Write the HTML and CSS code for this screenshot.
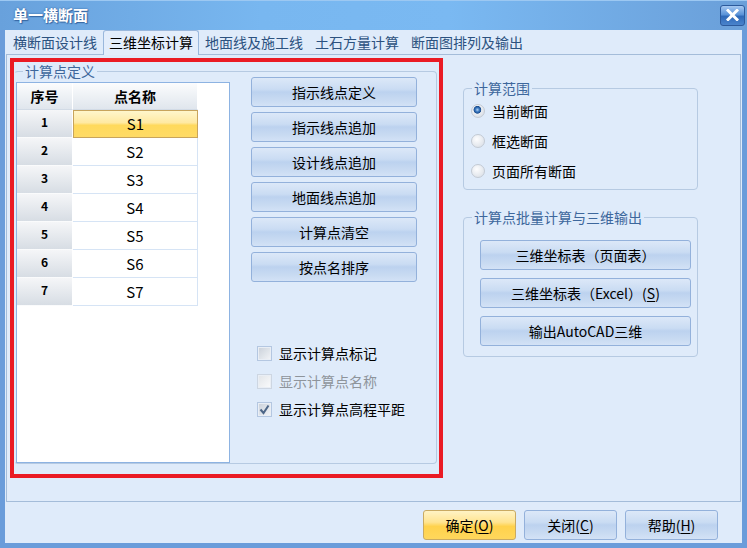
FILE: index.html
```html
<!DOCTYPE html>
<html lang="zh-CN">
<head>
    <meta charset="UTF-8">
    <title>单一横断面</title>
    <link rel="stylesheet" href="styles.css">
</head>
<body>
    <div class="window">
        <div class="titlebar">
            <span class="title">单一横断面</span>
            <button class="close-btn" title="关闭">
                <svg width="13" height="12" viewBox="0 0 13 12">
                    <path d="M2 1.5 L11 10.5 M11 1.5 L2 10.5" stroke="#fff" stroke-width="3" stroke-linecap="square"/>
                </svg>
            </button>
        </div>

        <div class="client">
            <div class="tabs">
                <span class="tab">横断面设计线</span>
                <span class="tab active">三维坐标计算</span>
                <span class="tab">地面线及施工线</span>
                <span class="tab">土石方量计算</span>
                <span class="tab">断面图排列及输出</span>
            </div>

            <div class="tab-page">
                <div class="highlight">
                    <fieldset class="group group-points">
                        <legend>计算点定义</legend>
                        <div class="points-body">
                            <div class="point-grid">
                                <div class="cell head">序号</div>
                                <div class="cell head">点名称</div>
                                <div class="cell num">1</div>
                                <div class="cell name selected">S1</div>
                                <div class="cell num">2</div>
                                <div class="cell name">S2</div>
                                <div class="cell num">3</div>
                                <div class="cell name">S3</div>
                                <div class="cell num">4</div>
                                <div class="cell name">S4</div>
                                <div class="cell num">5</div>
                                <div class="cell name">S5</div>
                                <div class="cell num">6</div>
                                <div class="cell name">S6</div>
                                <div class="cell num">7</div>
                                <div class="cell name">S7</div>
                            </div>

                            <div class="point-actions">
                                <button class="btn">指示线点定义</button>
                                <button class="btn">指示线点追加</button>
                                <button class="btn">设计线点追加</button>
                                <button class="btn">地面线点追加</button>
                                <button class="btn">计算点清空</button>
                                <button class="btn">按点名排序</button>

                                <div class="checks">
                                    <label class="check"><span class="box"></span>显示计算点标记</label>
                                    <label class="check disabled"><span class="box"></span>显示计算点名称</label>
                                    <label class="check">
                                        <span class="box">
                                            <svg width="13" height="13" viewBox="0 0 13 13">
                                                <path d="M2.5 6.5 L5.5 10 L10.5 2.5" fill="none" stroke="#4d6687" stroke-width="2"/>
                                            </svg>
                                        </span>显示计算点高程平距
                                    </label>
                                </div>
                            </div>
                        </div>
                    </fieldset>
                </div>

                <div class="side">
                    <fieldset class="group group-range">
                        <legend>计算范围</legend>
                        <div class="radios">
                            <label class="radio"><span class="dot on"></span>当前断面</label>
                            <label class="radio"><span class="dot"></span>框选断面</label>
                            <label class="radio"><span class="dot"></span>页面所有断面</label>
                        </div>
                    </fieldset>

                    <fieldset class="group group-output">
                        <legend>计算点批量计算与三维输出</legend>
                        <div class="output-actions">
                            <button class="btn">三维坐标表（页面表）</button>
                            <button class="btn">三维坐标表（Excel）(<u>S</u>)</button>
                            <button class="btn">输出AutoCAD三维</button>
                        </div>
                    </fieldset>
                </div>
            </div>

            <div class="footer">
                <button class="btn btn-ok">确定(<u>O</u>)</button>
                <button class="btn">关闭(<u>C</u>)</button>
                <button class="btn">帮助(<u>H</u>)</button>
            </div>
        </div>
    </div>
</body>
</html>
```

FILE: styles.css
```css
* {
    margin: 0;
    padding: 0;
    box-sizing: border-box;
}

body {
    width: 747px;
    height: 548px;
    overflow: hidden;
    font-family: "Noto Sans CJK SC", "Noto Sans", sans-serif;
    font-size: 14px;
    line-height: 16px;
    color: #000;
}

.window {
    width: 747px;
    height: 548px;
    background: #6a9cda;
    display: flex;
    flex-direction: column;
}

/* title bar */
.titlebar {
    height: 30px;
    display: flex;
    align-items: center;
    padding: 0 2px 0 13px;
    background: linear-gradient(90deg, #68a1dc 0%, #78b7f0 35%, #7ab9f2 60%, #6a9fd9 100%);
    box-shadow: inset 0 1px 0 #9cc8f2;
}

.title {
    color: #fff;
    font-size: 15px;
    font-weight: bold;
    text-shadow: 0 0 2px #2d5f9c, 1px 1px 1px #3a6aa5;
}

.close-btn {
    margin-left: auto;
    width: 25px;
    height: 21px;
    border: 1px solid #2c5a9c;
    border-radius: 3px;
    background: linear-gradient(#a5c8f2 0%, #5a93d8 45%, #2f69b8 55%, #4a84cc 100%);
    display: flex;
    align-items: center;
    justify-content: center;
}

/* client area */
.client {
    flex: 1;
    margin: 0 5px 5px;
    background: #dfebfa;
    display: flex;
    flex-direction: column;
}

.tabs {
    height: 24px;
    display: flex;
    align-items: flex-end;
    padding-left: 2px;
}

.tab {
    height: 24px;
    padding: 0 5px;
    border: 1px solid transparent;
    border-bottom: none;
    line-height: 22px;
    color: #2c5280;
    white-space: nowrap;
}

.tab.active {
    height: 25px;
    margin-bottom: -1px;
    color: #000;
    background: #e3edfb;
    border-color: #99b7dc;
    border-radius: 3px 3px 0 0;
    position: relative;
    z-index: 1;
}

.tab-page {
    height: 448px;
    margin: 0 1px;
    border: 1px solid #a4bcd9;
    padding: 3px;
    display: flex;
    align-items: flex-start;
}

.highlight {
    width: 433px;
    height: 420px;
    flex-shrink: 0;
    border: 4px solid #ea1b24;
}

/* group boxes */
.group {
    min-width: 0;
    border: 1px solid #b6cae2;
    border-radius: 4px;
}

.group legend {
    margin-left: 8px;
    padding: 0 2px;
    color: #3d679c;
    line-height: 16px;
}

.group-points {
    width: 423px;
    height: 401px;
    margin-top: 1px;
    border-left-color: transparent;
}

.points-body {
    display: flex;
    align-items: flex-start;
}

/* point grid */
.point-grid {
    width: 214px;
    height: 381px;
    margin: 3px 0 0 1px;
    border: 1px solid #8db3e2;
    background: #fff;
    display: grid;
    grid-template-columns: 56px 125px;
    grid-template-rows: 27px repeat(7, 28px);
    align-content: start;
}

.cell {
    display: flex;
    align-items: center;
    justify-content: center;
}

.cell.head {
    font-weight: bold;
    background: linear-gradient(#fbfcfd, #e0e6ed);
    border-right: 1px solid #fff;
    border-bottom: 1px solid #d2dbe6;
}

.cell.num {
    font-size: 12px;
    font-weight: bold;
    padding-bottom: 3px;
    background: linear-gradient(#f5f6f8, #d7dde4);
    border-right: 1px solid #fff;
    border-bottom: 1px solid #fafbfc;
}

.cell.name {
    font-size: 15px;
    border-right: 1px solid #d6e4f5;
    border-bottom: 1px solid #d6e4f5;
}

.cell.name.selected {
    border: 1px solid #c8a45c;
    background: linear-gradient(#fff6cc 0%, #ffe9a2 45%, #ffd95c 55%, #ffdb66 100%);
}

/* buttons */
.btn {
    height: 30px;
    border: 1px solid #93b1db;
    border-radius: 3px;
    background: linear-gradient(#dce8f8 0%, #cadcf3 40%, #bcd2ef 50%, #c9dbf2 80%, #d3e2f6 100%);
    font-family: inherit;
    font-size: 14px;
    color: #000;
}

.btn u {
    text-underline-offset: 2px;
}

.point-actions {
    width: 166px;
    margin: -2px 0 0 21px;
    display: flex;
    flex-direction: column;
    gap: 5px;
}

.checks {
    margin: 52px 0 0 6px;
    display: flex;
    flex-direction: column;
}

.check {
    height: 28px;
    display: flex;
    align-items: center;
    gap: 7px;
}

.check .box {
    width: 15px;
    height: 15px;
    border: 1px solid #b4c7e1;
    background: linear-gradient(135deg, #c9d0d9, #f3f5f8);
    box-shadow: inset 0 0 0 1px #e9eef5;
    display: flex;
    align-items: center;
    justify-content: center;
}

.check.disabled {
    color: #8e949b;
}

.check.disabled .box {
    border-color: #cdd6e2;
    background: linear-gradient(135deg, #e1e4e8, #fafbfc);
}

/* right side */
.side {
    width: 235px;
    margin-left: 20px;
    padding-top: 22px;
}

.group-range {
    height: 110px;
}

.radios {
    padding-left: 7px;
}

.radio {
    height: 30px;
    display: flex;
    align-items: center;
    gap: 7px;
}

.dot {
    width: 14px;
    height: 14px;
    border-radius: 50%;
    border: 1px solid #c3cad4;
    background: radial-gradient(circle at 40% 35%, #fdfdfe, #d6dce4);
}

.dot.on {
    background:
        radial-gradient(circle at 45% 40%, #b8d4f2 0, #3a78c0 2px, #1d4f90 3.5px, transparent 4.2px),
        radial-gradient(circle at 40% 35%, #fdfdfe, #d3d9e1);
}

.group-output {
    height: 148px;
    margin-top: 19px;
}

.output-actions {
    padding: 15px 6px 0 16px;
    display: flex;
    flex-direction: column;
    gap: 8px;
}

/* footer */
.footer {
    flex: 1;
    display: flex;
    justify-content: flex-end;
    gap: 8px;
    padding: 8px 24px 0 0;
}

.footer .btn {
    width: 93px;
}

.btn-ok {
    border-color: #c9aa62;
    background: linear-gradient(#fff3c4 0%, #ffe491 40%, #ffd24c 55%, #ffd75c 100%);
}
```
